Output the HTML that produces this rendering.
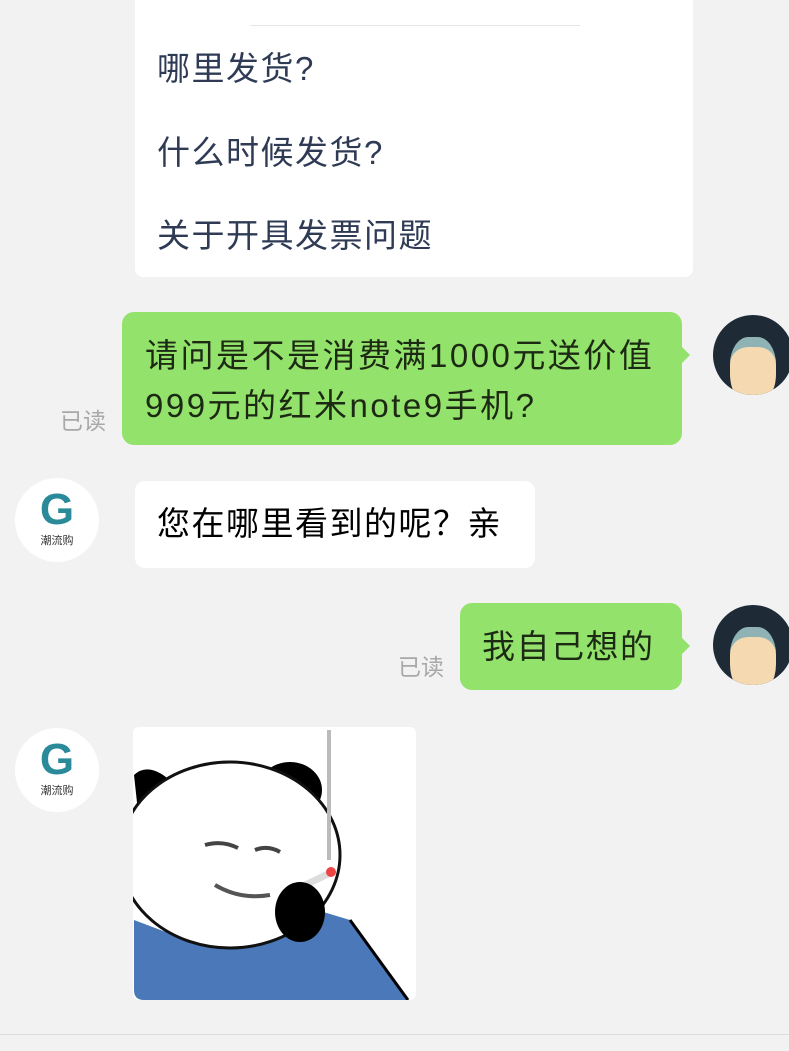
<!DOCTYPE html>
<html><head><meta charset="utf-8"><style>
body{margin:0;width:789px;height:1051px;background:#f2f2f2;position:relative;overflow:hidden;font-family:"Liberation Sans","Noto Sans CJK SC",sans-serif}
.a{position:absolute}
.t{font-size:33px;line-height:50px;white-space:nowrap;letter-spacing:1.5px}
.g{background:#93e26b;border-radius:12px;color:#1c2a14}
.w{background:#fff;border-radius:10px;color:#1a1a1a}
.r{color:#a8a8a8;font-size:23px}
.av{width:80px;height:80px;border-radius:50%;background:#1e2a36;overflow:hidden}
.gl{width:84px;height:84px;border-radius:50%;background:#fff;text-align:center}
</style></head><body>
<div class="a" style="left:135px;top:0;width:558px;height:277px;background:#fff;border-radius:0 0 8px 8px"></div>
<div class="a" style="left:250px;top:25px;width:330px;height:1px;background:#e6e6e6"></div>
<div class="a t" style="left:157px;top:44px;color:#2f3b55">哪里发货?</div>
<div class="a t" style="left:157px;top:128px;color:#2f3b55">什么时候发货?</div>
<div class="a t" style="left:157px;top:211px;color:#2f3b55">关于开具发票问题</div>

<div class="a g" style="left:122px;top:312px;width:560px;height:133px"></div>
<div class="a" style="left:680px;top:345px;border:10px solid transparent;border-left-color:#93e26b"></div>
<div class="a t" style="left:145px;top:331px;color:#1c2a14;line-height:50px;letter-spacing:2.5px">请问是不是消费满1000元送价值<br>999元的红米note9手机?</div>
<div class="a r" style="left:60px;top:402px">已读</div>
<div class="a av" style="left:713px;top:315px"><div style="margin:22px auto 0;width:46px;height:58px;background:#f5d9b0;border-radius:40% 40% 45% 45%;border-top:10px solid #8fb3b5"></div></div>

<div class="a gl" style="left:15px;top:478px"><div style="font-size:44px;font-weight:bold;color:#2a8a9a;line-height:52px;padding-top:6px">G</div><div style="font-size:11px;color:#333;margin-top:-4px">潮流购</div></div>
<div class="a w" style="left:135px;top:481px;width:400px;height:87px"></div>
<div class="a t" style="left:157px;top:499px">您在哪里看到的呢？亲</div>

<div class="a g" style="left:460px;top:603px;width:222px;height:87px"></div>
<div class="a" style="left:680px;top:636px;border:10px solid transparent;border-left-color:#93e26b"></div>
<div class="a t" style="left:482px;top:622px;color:#1c2a14">我自己想的</div>
<div class="a r" style="left:398px;top:648px">已读</div>
<div class="a av" style="left:713px;top:605px"><div style="margin:22px auto 0;width:46px;height:58px;background:#f5d9b0;border-radius:40% 40% 45% 45%;border-top:10px solid #8fb3b5"></div></div>

<div class="a gl" style="left:15px;top:728px"><div style="font-size:44px;font-weight:bold;color:#2a8a9a;line-height:52px;padding-top:6px">G</div><div style="font-size:11px;color:#333;margin-top:-4px">潮流购</div></div>
<div class="a" style="left:133px;top:727px;width:283px;height:273px;background:#fff;overflow:hidden;border-radius:6px">
<svg width="283" height="273" viewBox="133 727 283 273">
<path d="M134 920 L134 990 Q134 1000 144 1000 L408 1000 L350 920 L300 905 L200 945 Z" fill="#4a78b8"/>
<path d="M134 775 Q150 760 175 785 L140 830 Z" fill="#000"/>
<ellipse cx="290" cy="790" rx="32" ry="28" fill="#000"/>
<ellipse cx="230" cy="855" rx="110" ry="93" fill="#fff" stroke="#111" stroke-width="3"/>
<rect x="327" y="730" width="4" height="130" fill="#bbb"/>
<line x1="295" y1="890" x2="332" y2="872" stroke="#ddd" stroke-width="7"/>
<circle cx="331" cy="872" r="5" fill="#e44"/>
<ellipse cx="300" cy="912" rx="25" ry="30" fill="#000"/>
<path d="M205 845 Q222 840 238 848 M255 850 Q268 845 280 852" stroke="#444" stroke-width="4" fill="none"/>
<path d="M215 885 Q240 900 270 895" stroke="#555" stroke-width="4" fill="none"/>
<path d="M350 920 L408 1000" stroke="#000" stroke-width="3"/>
</svg></div>
<div class="a" style="left:0;top:1034px;width:789px;height:1px;background:#ddd"></div>
</body></html>
